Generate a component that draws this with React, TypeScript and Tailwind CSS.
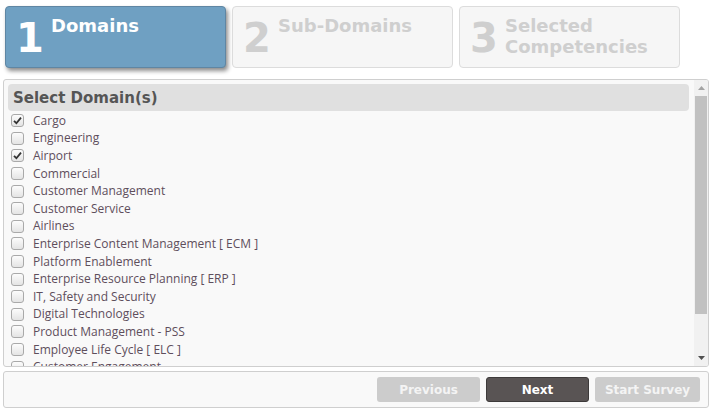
import React from "react";

interface Domain { label: string; checked: boolean; }

const domains: Domain[] = [
  { label: "Cargo", checked: true },
  { label: "Engineering", checked: false },
  { label: "Airport", checked: true },
  { label: "Commercial", checked: false },
  { label: "Customer Management", checked: false },
  { label: "Customer Service", checked: false },
  { label: "Airlines", checked: false },
  { label: "Enterprise Content Management [ ECM ]", checked: false },
  { label: "Platform Enablement", checked: false },
  { label: "Enterprise Resource Planning [ ERP ]", checked: false },
  { label: "IT, Safety and Security", checked: false },
  { label: "Digital Technologies", checked: false },
  { label: "Product Management - PSS", checked: false },
  { label: "Employee Life Cycle [ ELC ]", checked: false },
  { label: "Customer Engagement", checked: false },
];

function Step({ num, lines, active }: { num: number; lines: string[]; active?: boolean }) {
  return (
    <div
      className={
        active
          ? "w-[221px] h-[62px] rounded-[4px] border border-[#5f86a3] bg-[#6fa0c2] shadow-[2px_3px_4px_rgba(0,0,0,0.45)] flex items-start pl-[10px] text-white"
          : "w-[221px] h-[62px] rounded-[4px] border border-[#dcdcdc] bg-[#f6f6f6] flex items-start pl-[10px] text-[#cfcfcf]"
      }
    >
      <span className="font-['DejaVu_Sans',sans-serif] font-bold text-[40px] leading-none mt-[11px] w-[35px]">{num}</span>
      <div className="font-['DejaVu_Sans',sans-serif] font-bold text-[18px] leading-[21px] mt-[8px]">
        {lines.map((l) => (
          <div key={l}>{l}</div>
        ))}
      </div>
    </div>
  );
}

function Check({ checked }: { checked: boolean }) {
  return (
    <span className="w-[13px] h-[13px] rounded-[3px] border border-[#a9a9a9] bg-gradient-to-b from-[#fcfcfc] to-[#e4e4e4] flex items-center justify-center shrink-0">
      {checked && (
        <svg width="9" height="9" viewBox="0 0 9 9">
          <path d="M1 4.8 L3.4 7.2 L8 1.6" stroke="#333" strokeWidth="1.8" fill="none" />
        </svg>
      )}
    </span>
  );
}

export default function App() {
  return (
    <div className="w-[712px] h-[411px] bg-white relative overflow-hidden font-['Open_Sans',sans-serif]">
      <div className="flex gap-[6px] pl-[5px] pt-[6px]">
        <Step num={1} lines={["Domains"]} active />
        <Step num={2} lines={["Sub-Domains"]} />
        <Step num={3} lines={["Selected", "Competencies"]} />
      </div>

      <div className="ml-[3px] mt-[11px] w-[706px] h-[288px] border border-[#cfcfcf] rounded-[3px] bg-[#f9f9f9] flex overflow-hidden">
        <div className="flex-1 pl-[4px] pr-[5px] pt-[4px] overflow-hidden">
          <div className="h-[27px] rounded-[4px] bg-[#e0e0e0] px-[5px] pt-[2px] flex items-center font-['DejaVu_Sans',sans-serif] font-bold text-[15px] text-[#555]">
            Select Domain(s)
          </div>
          <div className="pt-[1px]">
            {domains.map((d) => (
              <div key={d.label} className="h-[17.6px] flex items-center pl-[3px] gap-[9px]">
                <Check checked={d.checked} />
                <span className="text-[12px] text-[#5e4e5c] leading-none">{d.label}</span>
              </div>
            ))}
          </div>
        </div>
        <div className="w-[14px] bg-[#f1f1f1] flex flex-col items-center">
          <div className="h-[16px] flex items-center justify-center">
            <svg width="7" height="4" viewBox="0 0 7 4"><path d="M0 4 L3.5 0 L7 4 Z" fill="#a3a3a3" /></svg>
          </div>
          <div className="w-[12px] h-[218px] bg-[#c1c1c1]" />
          <div className="flex-1" />
          <div className="h-[16px] flex items-center justify-center">
            <svg width="7" height="4" viewBox="0 0 7 4"><path d="M0 0 L7 0 L3.5 4 Z" fill="#505050" /></svg>
          </div>
        </div>
      </div>

      <div className="ml-[3px] mt-[4px] w-[706px] h-[37px] border border-[#cfcfcf] rounded-[3px] bg-[#f9f9f9] flex items-center justify-end gap-[6px] pr-[8px] font-['DejaVu_Sans',sans-serif] font-bold text-[12px]">
        <button className="w-[103px] h-[25px] rounded-[3px] bg-[#cccccc] text-[#f4f4f4]">Previous</button>
        <button className="w-[103px] h-[25px] rounded-[3px] bg-[#595454] border border-[#3d3a3a] text-white">Next</button>
        <button className="w-[105px] h-[25px] rounded-[3px] bg-[#cccccc] text-[#f4f4f4]">Start Survey</button>
      </div>
    </div>
  );
}
